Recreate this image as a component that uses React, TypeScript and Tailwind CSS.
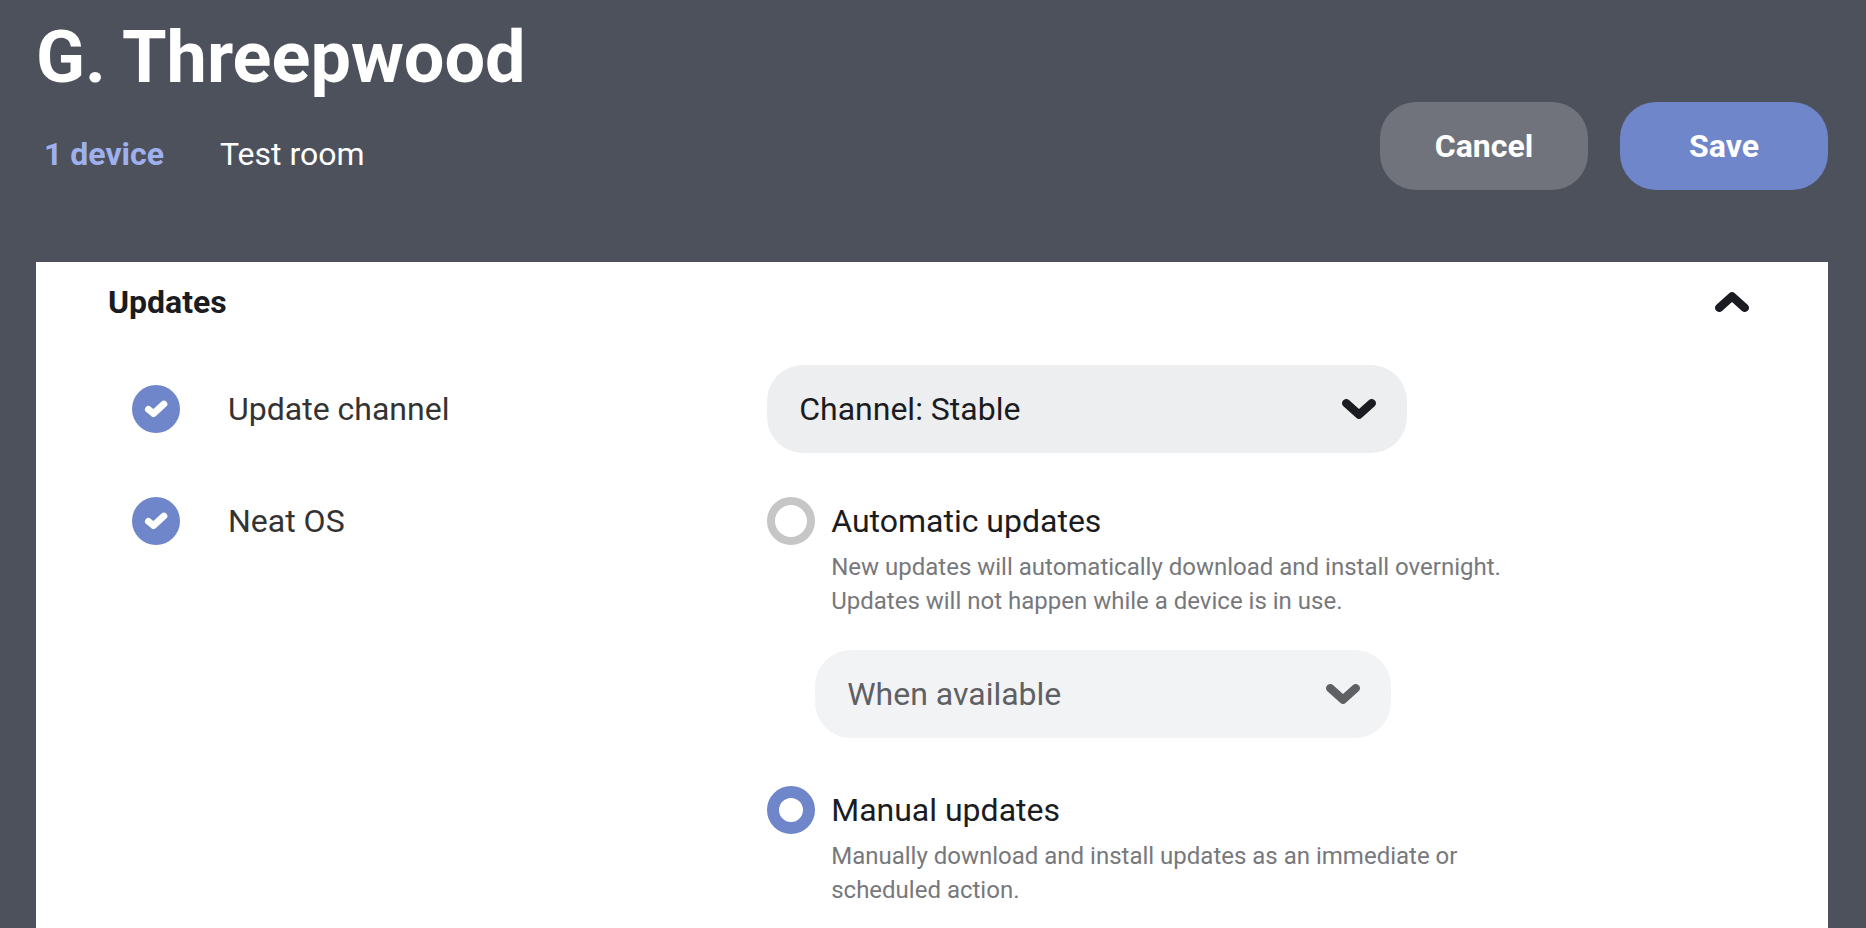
import { useState } from "react";
import type { ReactNode } from "react";
import clsx from "clsx";

type UpdateMode = "automatic" | "manual";

function Chevron({ className }: { className?: string }) {
  return (
    <svg viewBox="0 0 34 20" fill="none" aria-hidden="true" className={clsx("h-5 w-[34px] shrink-0", className)}>
      <path
        d="M4.2 4.2 17 15.6 29.8 4.2"
        stroke="currentColor"
        strokeWidth="8.4"
        strokeLinecap="round"
        strokeLinejoin="round"
      />
    </svg>
  );
}

function SettingRow({
  id,
  label,
  className,
  children,
}: {
  id: string;
  label: string;
  className?: string;
  children: ReactNode;
}) {
  const [enabled, setEnabled] = useState(true);

  return (
    <div className={clsx("flex", className)}>
      <div className="flex w-2/5 items-center gap-12">
        <span className="relative block size-12 shrink-0">
          <input
            id={id}
            type="checkbox"
            checked={enabled}
            onChange={(e) => setEnabled(e.target.checked)}
            className="block size-12 appearance-none rounded-full border-8 border-[#c6c6c6] checked:border-0 checked:bg-[#6f86ca]"
          />
          {enabled && (
            <svg viewBox="0 0 48 48" fill="none" aria-hidden="true" className="pointer-events-none absolute inset-0">
              <path
                d="M16.4 24.3 21.6 28.6 31.9 19"
                stroke="#fff"
                strokeWidth="6.8"
                strokeLinecap="round"
                strokeLinejoin="round"
              />
            </svg>
          )}
        </span>
        <label htmlFor={id} className="text-[#333333]">
          {label}
        </label>
      </div>
      <div className="min-w-0 flex-1">{children}</div>
    </div>
  );
}

function Select({
  label,
  options,
  disabled,
  className,
}: {
  label: string;
  options: string[];
  disabled?: boolean;
  className?: string;
}) {
  return (
    <div className={clsx("relative", disabled ? "text-[#5f6064]" : "text-[#1b1c22]", className)}>
      <select
        aria-label={label}
        disabled={disabled}
        className={clsx(
          "block h-22 w-full appearance-none rounded-[36px] pr-20 pl-8 opacity-100 outline-none",
          disabled ? "bg-[#f2f3f5]" : "bg-[#edeef0]"
        )}
      >
        {options.map((o) => (
          <option key={o}>{o}</option>
        ))}
      </select>
      <Chevron className="pointer-events-none absolute top-1/2 right-[31px] -translate-y-1/2" />
    </div>
  );
}

function ModeOption({
  value,
  mode,
  onSelect,
  title,
  description,
}: {
  value: UpdateMode;
  mode: UpdateMode;
  onSelect: (mode: UpdateMode) => void;
  title: string;
  description: string;
}) {
  return (
    <div className="flex items-start gap-4">
      <input
        id={`mode-${value}`}
        type="radio"
        name="update-mode"
        checked={mode === value}
        onChange={() => onSelect(value)}
        className="size-12 shrink-0 appearance-none rounded-full border-8 border-[#c6c6c6] bg-white checked:border-12 checked:border-[#6f86ca]"
      />
      <div>
        <label htmlFor={`mode-${value}`} className="block leading-[48px] text-[#1b1c22]">
          {title}
        </label>
        <p className="mt-[5px] max-w-[680px] text-2xl leading-[34px] text-[#77787c]">{description}</p>
      </div>
    </div>
  );
}

export default function App() {
  const [open, setOpen] = useState(true);
  const [mode, setMode] = useState<UpdateMode>("manual");

  return (
    <div className="flex min-h-screen flex-col bg-[#4d515c] pr-[38px] pl-9 font-['Roboto','Liberation_Sans',sans-serif] text-[32px] leading-10">
      <header className="flex items-end justify-between pt-[18px] pb-18">
        <div className="flex flex-col gap-5">
          <h1 className="text-7xl leading-[80px] font-bold text-white">G. Threepwood</h1>
          <div className="flex gap-10">
            <a href="#devices" className="px-2 py-4 font-bold text-[#9eb0ee]">
              1 device
            </a>
            <span className="px-2 py-4 text-white">Test room</span>
          </div>
        </div>
        <div className="flex gap-8">
          <button type="button" className="h-22 w-52 rounded-[36px] bg-[#70737c] font-bold text-white">
            Cancel
          </button>
          <button type="button" className="h-22 w-52 rounded-[36px] bg-[#6f86ca] font-bold text-white">
            Save
          </button>
        </div>
      </header>

      <main className="flex-1 bg-white pb-5">
        <h2>
          <button
            type="button"
            aria-expanded={open}
            onClick={() => setOpen(!open)}
            className="flex w-full items-center justify-between py-5 pr-[79px] pl-18 font-bold text-[#1b1c22]"
          >
            Updates
            <Chevron className={open ? "rotate-180" : undefined} />
          </button>
        </h2>

        {open && (
          <div className="flex flex-col gap-11 pt-[23px] pr-27 pl-24">
            <SettingRow id="update-channel" label="Update channel" className="items-center">
              <Select label="Channel" options={["Channel: Stable", "Channel: Preview"]} className="max-w-[640px]" />
            </SettingRow>
            <SettingRow id="neat-os" label="Neat OS" className="items-start">
              <ModeOption
                value="automatic"
                mode={mode}
                onSelect={setMode}
                title="Automatic updates"
                description="New updates will automatically download and install overnight. Updates will not happen while a device is in use."
              />
              <Select
                label="Install time"
                options={["When available", "Overnight"]}
                disabled={mode !== "automatic"}
                className="mt-8 mb-12 ml-12 max-w-[576px]"
              />
              <ModeOption
                value="manual"
                mode={mode}
                onSelect={setMode}
                title="Manual updates"
                description="Manually download and install updates as an immediate or scheduled action."
              />
            </SettingRow>
          </div>
        )}
      </main>
    </div>
  );
}
